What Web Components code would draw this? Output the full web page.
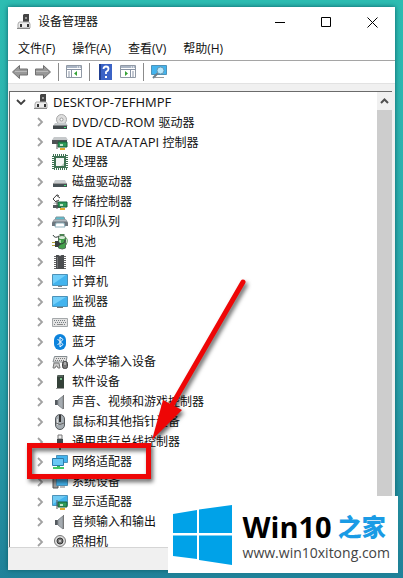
<!DOCTYPE html>
<html lang="zh-CN">

<head>
    <meta charset="UTF-8">
    <meta name="viewport" content="width=device-width, initial-scale=1.0">
    <title>设备管理器</title>
    <style>
        body {
            margin: 0;
            height: 100vh;
            overflow: hidden;
            background: linear-gradient(#2dbdb2, #2aa6ac 60%, #20829a);
            font: 12px/20px "Open Sans", "Noto Sans CJK SC", sans-serif;
            color: #111;
        }
        .latin {
            font-size: 13px;
        }
    </style>
</head>

<body>
    <template id="window-template">
        <style>
            :host {
                display: flex;
                box-sizing: border-box;
                height: 100%;
                padding: 7px 8px 8px;
            }
            section {
                flex: 1;
                min-width: 0;
                display: flex;
                flex-direction: column;
                background: #f0f0f0;
                box-shadow: 0 0 5px #0c5f68;
            }
            header {
                display: flex;
                align-items: center;
                height: 30px;
                padding-left: 8px;
                background: #fff;
            }
            h1 {
                flex: 1;
                margin: 0 0 0 6px;
                font: inherit;
            }
            header button {
                width: 46px;
                height: 28px;
                padding: 0;
                border: 0;
                background: none;
            }
            header svg {
                display: block;
                margin: auto;
                fill: none;
                stroke: #000;
            }
            footer {
                height: 22px;
                border-top: 1px solid #d5d5d5;
            }
        </style>
        <section>
            <header>
                <device-icon name="computer"></device-icon>
                <h1><slot name="title"></slot></h1>
                <button aria-label="最小化"><svg width="11" height="11"><path d="M0 5.5h10"/></svg></button>
                <button aria-label="最大化"><svg width="11" height="11"><path d="M.5.5h9v9h-9z"/></svg></button>
                <button aria-label="关闭"><svg width="11" height="11"><path d="M.5.5l10 10M10.5.5l-10 10"/></svg></button>
            </header>
            <slot></slot>
            <footer></footer>
        </section>
    </template>

    <template id="menu-template">
        <style>
            :host {
                display: block;
                background: #fff;
                border-bottom: 1px solid #a5a5a5;
            }
            nav {
                display: flex;
                gap: 17px;
                height: 23px;
                padding: 0 10px;
            }
            button {
                padding: 0;
                border: 0;
                background: none;
                font: inherit;
                color: inherit;
            }
        </style>
        <nav>
            <button>文件(F)</button>
            <button>操作(A)</button>
            <button>查看(V)</button>
            <button>帮助(H)</button>
        </nav>
    </template>

    <template id="toolbar-template">
        <style>
            :host {
                display: flex;
                align-items: center;
                gap: 6px;
                height: 22px;
                padding-left: 4px;
                background: #fff;
                border-bottom: 1px solid #e2e2e2;
                margin-bottom: 7px;
            }
            button {
                width: 17px;
                height: 16px;
                padding: 0;
                border: 0;
                background: none;
            }
            i {
                width: 1px;
                height: 18px;
                margin-right: 1px;
                background: #8b8b8b;
            }
        </style>
        <button aria-label="后退"><device-icon name="back"></device-icon></button>
        <button aria-label="前进"><device-icon name="forward"></device-icon></button>
        <i></i>
        <button aria-label="显示控制台树"><device-icon name="panelLeft"></device-icon></button>
        <i></i>
        <button aria-label="帮助"><device-icon name="help"></device-icon></button>
        <button aria-label="显示操作窗格"><device-icon name="panelRight"></device-icon></button>
        <i></i>
        <button aria-label="扫描检测硬件改动"><device-icon name="scan"></device-icon></button>
    </template>

    <template id="tree-template">
        <style>
            :host {
                flex: 1;
                min-height: 0;
                display: flex;
                position: relative;
                overflow: hidden;
                margin: 0 3px 0 1px;
                border-top: 1px solid #6b6b6b;
                border-left: 1px solid #6b6b6b;
                background: #fff;
            }
            .items {
                flex: 1;
                min-width: 0;
            }
            .children {
                padding-left: 19px;
            }
            .bar {
                width: 15px;
                display: flex;
                flex-direction: column;
                background: #cdcdcd;
            }
            .bar button {
                height: 18px;
                padding: 0;
                border: 0;
                background: #f0f0f0;
            }
            .bar svg {
                display: block;
                margin: auto;
                fill: none;
                stroke: #505050;
                stroke-width: 2;
            }
        </style>
        <div class="items" role="tree">
            <slot name="root"></slot>
            <div class="children" role="group"><slot></slot></div>
        </div>
        <div class="bar"><button aria-label="向上滚动"><svg width="9" height="6"><path d="M1 5l3.5-3.5L8 5"/></svg></button></div>
        <slot name="marks"></slot>
    </template>

    <template id="item-template">
        <style>
            :host {
                display: flex;
                align-items: center;
                height: 20px;
                padding-left: 5px;
                line-height: 14px;
                white-space: nowrap;
            }
            button {
                width: 12px;
                height: 16px;
                margin-right: 6px;
                padding: 0;
                border: 0;
                background: none;
            }
            svg {
                display: block;
                margin: auto;
                fill: none;
                stroke: #a2a2a2;
                stroke-width: 1.8;
            }
            :host([open]) svg {
                stroke: #404040;
                transform: rotate(90deg);
            }
            span {
                margin-left: 4px;
            }
        </style>
        <button aria-label="展开"><svg width="10" height="10"><path d="M3 1l4 4-4 4"/></svg></button>
        <device-icon></device-icon>
        <span><slot></slot></span>
    </template>

    <template id="marks-template">
        <style>
            :host {
                position: absolute;
                left: 0;
                top: 0;
                pointer-events: none;
            }
            svg {
                display: block;
                filter: drop-shadow(2px 3px 2px #0009);
            }
        </style>
        <svg width="260" height="400" viewBox="10 91 260 400">
            <path d="M29.500 444.500h119v31h-119z" fill="none" stroke="#ee0606" stroke-width="5"/>
            <path d="M243 281L172 404" stroke="#ee0606" stroke-width="5" stroke-linecap="round"/>
            <path d="M152 439L163 399L182 409z" fill="#ee0606"/>
        </svg>
    </template>

    <template id="brand-template">
        <style>
            :host {
                position: absolute;
                right: 5px;
                bottom: 5px;
                display: flex;
                align-items: center;
                gap: 11px;
                box-sizing: border-box;
                height: 77px;
                padding: 0 8px 0 5px;
                background: #fff;
            }
            svg {
                display: block;
            }
            .name {
                display: flex;
                align-items: center;
                gap: 6px;
                padding-top: 4px;
                font-size: 29px;
                font-weight: 700;
                line-height: 32px;
                color: #000;
            }
            .name b {
                font-size: 24px;
                color: #1a9be5;
            }
            a {
                display: block;
                font-size: 14px;
                line-height: 20px;
                color: #444;
                text-decoration: none;
            }
        </style>
        <svg width="59" height="60" fill="#00a2e8"><path d="M0 9l24-4v23H0zM26 4.500L59 0v28H26zM0 30.500h24v23.500L0 51zM26 30.500h33V60l-33-5z"/></svg>
        <div>
            <div class="name"><slot name="name"></slot><b><slot name="suffix"></slot></b></div>
            <a href="#"><slot></slot></a>
        </div>
    </template>

    <app-window>
        <span slot="title">设备管理器</span>
        <menu-bar></menu-bar>
        <tool-bar></tool-bar>
        <device-tree>
            <tree-item slot="root" icon="computer" open><span class="latin">DESKTOP-7EFHMPF</span></tree-item>
            <tree-item icon="dvd"><span class="latin">DVD/CD-ROM </span>驱动器</tree-item>
            <tree-item icon="ide"><span class="latin">IDE ATA/ATAPI </span>控制器</tree-item>
            <tree-item icon="cpu">处理器</tree-item>
            <tree-item icon="disk">磁盘驱动器</tree-item>
            <tree-item icon="storage">存储控制器</tree-item>
            <tree-item icon="printer">打印队列</tree-item>
            <tree-item icon="battery">电池</tree-item>
            <tree-item icon="firmware">固件</tree-item>
            <tree-item icon="pc">计算机</tree-item>
            <tree-item icon="monitor">监视器</tree-item>
            <tree-item icon="keyboard">键盘</tree-item>
            <tree-item icon="bluetooth">蓝牙</tree-item>
            <tree-item icon="hid">人体学输入设备</tree-item>
            <tree-item icon="software">软件设备</tree-item>
            <tree-item icon="sound">声音、视频和游戏控制器</tree-item>
            <tree-item icon="mouse">鼠标和其他指针设备</tree-item>
            <tree-item icon="usb">通用串行总线控制器</tree-item>
            <tree-item icon="network">网络适配器</tree-item>
            <tree-item icon="system">系统设备</tree-item>
            <tree-item icon="display">显示适配器</tree-item>
            <tree-item icon="sound">音频输入和输出</tree-item>
            <tree-item icon="camera">照相机</tree-item>
            <mark-layer slot="marks"></mark-layer>
        </device-tree>
    </app-window>
    <site-brand>
        <span slot="name">Win10</span>
        <span slot="suffix">之家</span>
        www.win10xitong.com
    </site-brand>

    <script type="module">
        const screen = 'fill="#43b4ee" stroke="#4d92b8"';
        const board = '<path d="M6 8h9v5H6z" fill="#2f9b59" stroke="#17613a"/><path d="M8 10h3v2H8z" fill="#bfe6c8"/><path d="M8 14h5v2H8z" fill="#e0a92c"/><path d="M5 6v9" stroke="#555"/>';
        const speaker = '<path d="M3 6h3v5H3z" fill="#555b60"/><path d="M6 6l5-4v13l-5-4z" fill="#a5abb0" stroke="#858b90"/><path d="M11.5 1v14" stroke="#777"/>';
        const drive = '<path d="M3 9h11l2 3H1z" fill="#c5c9cb"/><path d="M1 11.500h14V15H1z" fill="#42484b"/><path d="M12 13h2v1h-2z" fill="#46e37c"/>';
        const panel = '<path d="M.5 1.500h15v12H.5z" fill="#fff" stroke="#9099a5"/><path d="M1 2h14v2H1z" fill="#aab5c5"/><path d="M11 3h1m1 0h1" stroke="#fff"/><path d="M1 5.500h14" stroke="#8893a5"/>';

        // 16x16 drawings, keyed by the name attribute
        const icons = {
            computer: '<path d="M8 0h5v9H7V1z" fill="#444"/><path d="M9 3h2v2H9z" fill="#999"/><path d="M3 8h10l1 2v4H2v-4z" fill="#ececec" stroke="#aaa"/><path d="M4 10h2v3H4zM11 10h2v3h-2z" fill="#333"/><path d="M1 14.500h13" stroke="#888"/>',
            dvd: '<circle cx="9.500" cy="5.500" r="5" fill="#dedede" stroke="#aaa"/><circle cx="9.500" cy="5.500" r="1.500" fill="#fff" stroke="#999"/>' + drive,
            ide: '<path d="M2 3h12l2 3H0z" fill="#c6c9cb"/><path d="M0 6h15v4H0z" fill="#4c5154"/>' + board,
            cpu: '<path d="M1 1h14v14H1z" fill="none" stroke="#3f7253" stroke-width="2" stroke-dasharray="1 1"/><path d="M2 2h12v12H2z" fill="#3f7253"/><path d="M4 4h8v8H4z" fill="#f5f7f5"/><path d="M9 12l3-3v3z" fill="#b8cbbe"/>',
            disk: '<path d="M3 6h10l2 4H1z" fill="#c9cdcf"/><path d="M1 9.500h14V13H1z" fill="#465054"/><path d="M12 11h2v1h-2z" fill="#46e37c"/><path d="M1 9.500h14" stroke="#999"/>',
            storage: '<path d="M7 2L5 .8 1 5l3 3 3-2M4 1l4 3" fill="none" stroke="#444"/><path d="M1 11h8v3H1z" fill="#555c60"/><path d="M1 10l2-2h6v2z" fill="#c5c9cb"/>' + board,
            printer: '<path d="M4 3h8l1 3H3z" fill="#5cbccc" stroke="#7e989f"/><path d="M2 5.500h12l2 3V12H0V8.500z" fill="#6e777e"/><path d="M2 5.500h12l1 2H1z" fill="#b0b8be"/><path d="M4 9h8l1 4H3z" fill="#fff" stroke="#8cb0bc"/>',
            battery: '<path d="M8 2h4V0H8zM6.500 3q4-2 7 0v11q-3 2-7 0z" fill="#43a24b" stroke="#527057"/><ellipse cx="10" cy="3.500" rx="3" ry="1.500" fill="#d8e9d8"/><path d="M8 6v3" stroke="#a5dba6" stroke-width="2"/><path d="M13 3q4 2 1 8" fill="none" stroke="#5a9b59"/><path d="M0 8h3v1H0zm0 3h3v1H0z" fill="#b5a33b"/><path d="M3 7h3l3 3-3 3H3z" fill="#3a4040"/><path d="M1 1q2 4 6 1M8 10q5 0 5-4" fill="none" stroke="#303a36"/>',
            firmware: '<path d="M2 2.500h12M2 4.500h12M2 6.500h12M2 8.500h12M2 10.500h12M2 12.500h12M2 14.500h12" stroke="#666"/><path d="M4 1h2.500L8 2l1.500-1H12v14H4z" fill="#4b4d4f"/><path d="M5.500 3v11" stroke="#707274"/>',
            pc: `<path d="M.5.5h15v11H.5z" ${screen}/><path d="M1 10L14 1H1z" fill="#72cffa"/><path d="M6 12h4v1H6z" fill="#888"/><path d="M1 14.500h14" stroke="#8d999f"/>`,
            monitor: `<path d="M.5 2.500h15v10H.5z" ${screen}/><path d="M1 11L14 3H1z" fill="#72cffa"/><path d="M5 13h6v1H5z" fill="#777"/>`,
            keyboard: '<path d="M.5 4.500h15v8H.5z" fill="#e3e3e3" stroke="#a4a8aa"/><path d="M2 6.500h12M3 8.500h11M2 10.500h2m8 0h2" stroke="#777e82" stroke-dasharray="1 1"/><path d="M5 10.500h6" stroke="#888"/>',
            bluetooth: '<rect x="2" y="0" width="12" height="16" rx="6" fill="#0c83dc"/><path d="M5.500 5l5.500 5.500L8 13V3l3 2.500L5.500 11" fill="none" stroke="#fff"/>',
            hid: '<path d="M2.500 2.500H15L14 8H1z" fill="#e2e2e2" stroke="#868d90"/><path d="M4 4.500h10M3 6.500h10" stroke="#777" stroke-dasharray="1 1"/><path d="M1 14l1-5h5l1 5H6l-1-2H4l-1 2z" fill="#ccc" stroke="#777"/><rect x="10.500" y="7.500" width="5" height="7" rx="2" fill="#777" stroke="#444"/><path d="M13 8v3" stroke="#ddd"/>',
            software: '<path d="M5 2l1-1h6v13H5z" fill="#344139"/><path d="M5 2h6" stroke="#75827a"/><path d="M8 4h2v2H8z" fill="#77c087"/><path d="M4 14.500h8" stroke="#999"/>',
            sound: speaker,
            mouse: '<rect x="3.500" y=".5" width="9" height="15" rx="4.500" fill="#a6adb2" stroke="#54595d"/><path d="M5.500 5v6" stroke="#ddd"/><path d="M8 1v7" stroke="#333" stroke-width="2"/><path d="M4 9q4 3 8 0" fill="none" stroke="#666"/>',
            usb: '<path d="M6 1h4v4H6z" fill="#eee" stroke="#777"/><path d="M5 5h6v6l-1 2H6l-1-2z" fill="#41474b"/><path d="M8 13v3" stroke="#666" stroke-width="2"/>',
            network: `<path d="M4.500 1.500h11v7h-11z" ${screen}/><path d="M.5 4.500h11v7H.5z" fill="#69c8f4" stroke="#2b7dad"/><path d="M5 12h3v2H5z" fill="#37b55a"/><path d="M1 14h11" stroke="#42c967" stroke-width="2"/>`,
            system: `<path d="M1 2h5v12H1z" fill="#999" stroke="#555"/><path d="M4.500 4.500h11v7h-11z" ${screen}/><path d="M8 13h5" stroke="#777"/>`,
            display: `<path d="M.5 1.500h15v10H.5z" ${screen}/><path d="M1 10L14 2H1z" fill="#70cbf4"/>${board}`,
            camera: '<circle cx="8" cy="7" r="5.500" fill="#ddd" stroke="#777"/><circle cx="8" cy="7" r="3" fill="#777" stroke="#333"/><circle cx="8" cy="7" r="1" fill="#ddd"/><path d="M4 13h8l1 1H3z" fill="#888"/>',
            back: '<path d="M.5 8l7-6.500V5h8v6h-8v3.500z" fill="#999" stroke="#707070"/><path d="M3 7.500h12" stroke="#bbb"/>',
            forward: '<path d="M15.500 8l-7-6.500V5h-8v6h8v3.500z" fill="#999" stroke="#707070"/><path d="M1 7.500h12" stroke="#bbb"/>',
            panelLeft: panel + '<path d="M5.500 6v7" stroke="#8893a5"/><path d="M2 8h2m-2 2h2m-2 2h2" stroke="#8893a5"/><path d="M11 7v5L8 9.500z" fill="#36a336"/>',
            panelRight: panel + '<path d="M10.500 6v7" stroke="#8893a5"/><path d="M12 8h2m-2 2h2m-2 2h2" stroke="#8893a5"/><path d="M5 7v5l3-2.500z" fill="#36a336"/>',
            help: '<path d="M2 0h13v16H2z" fill="#3b63c6"/><path d="M2 0h2v16H2z" fill="#213f91"/><path d="M6.500 5q0-2.500 2.500-2.500T11.500 5q0 1.500-2.500 3v2" fill="none" stroke="#fff" stroke-width="1.800"/><path d="M8 12h2v2H8z" fill="#fff"/>',
            scan: `<path d="M.5 1.500h15v9H.5z" ${screen}/><path d="M4 13.500h9" stroke="#999"/><path d="M7 9l-5 5" stroke="#697f8c" stroke-width="2"/><circle cx="9.500" cy="6.500" r="3.500" fill="#b9e8fc" stroke="#6797b0"/>`
        };

        class DeviceIcon extends HTMLElement {
            constructor() {
                super();
                this.attachShadow({ mode: 'open' });
            }

            connectedCallback() {
                this.draw();
            }

            attributeChangedCallback() {
                this.draw();
            }

            draw() {
                const art = icons[this.getAttribute('name')] || '';
                this.shadowRoot.innerHTML = `
                    <style>
                        :host { display: block; flex: none; width: 16px; height: 16px; }
                        svg { display: block; }
                    </style>
                    <svg width="16" height="16" viewBox="0 0 16 16" aria-hidden="true">${art}</svg>`;
            }

            static get observedAttributes() {
                return ['name'];
            }
        }

        class TemplateElement extends HTMLElement {
            constructor() {
                super();
                const tmp = document.getElementById(this.constructor.template);
                this.attachShadow({ mode: 'open' }).appendChild(tmp.content.cloneNode(true));
            }
        }

        class AppWindow extends TemplateElement {
            static template = 'window-template';
        }

        class MenuBar extends TemplateElement {
            static template = 'menu-template';
        }

        class ToolBar extends TemplateElement {
            static template = 'toolbar-template';
        }

        class DeviceTree extends TemplateElement {
            static template = 'tree-template';
        }

        class TreeItem extends TemplateElement {
            static template = 'item-template';

            connectedCallback() {
                this.setAttribute('role', 'treeitem');
                this.shadowRoot.querySelector('device-icon').setAttribute('name', this.getAttribute('icon'));
            }
        }

        class MarkLayer extends TemplateElement {
            static template = 'marks-template';
        }

        class SiteBrand extends TemplateElement {
            static template = 'brand-template';
        }

        customElements.define('device-icon', DeviceIcon);
        customElements.define('app-window', AppWindow);
        customElements.define('menu-bar', MenuBar);
        customElements.define('tool-bar', ToolBar);
        customElements.define('device-tree', DeviceTree);
        customElements.define('tree-item', TreeItem);
        customElements.define('mark-layer', MarkLayer);
        customElements.define('site-brand', SiteBrand);
    </script>
</body>

</html>
